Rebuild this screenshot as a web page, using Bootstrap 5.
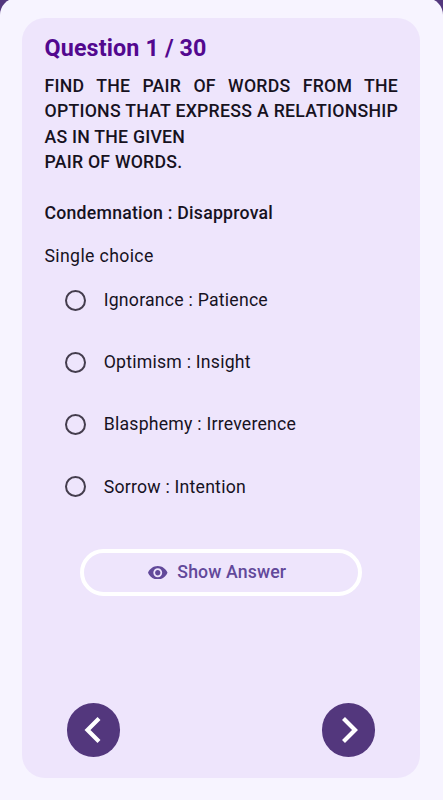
<!DOCTYPE html>
<html lang="en">
<head>
<meta charset="utf-8">
<meta name="viewport" content="width=device-width, initial-scale=1">
<title>Question 1 / 30</title>
<link href="https://cdn.jsdelivr.net/npm/bootstrap@5.3.0/dist/css/bootstrap.min.css" rel="stylesheet">
<style>
body{font-family:Roboto,"Noto Sans",sans-serif;background:#53377d;color:#17121f;height:800px;font-size:17.7px;letter-spacing:.22px;overflow:hidden}
.sheet{background:#f7f4ff;border-radius:17px 17px 0 0;height:802px;margin-top:-2px;padding:20px 23px 22px 22px}
.quiz{background:#eee5fc;border-radius:23px;padding:0 22px 21.5px 22.5px}
.heading{font-size:23.3px;font-weight:700;color:#53088f;line-height:28px;margin:16px 0 0;letter-spacing:.14px}
.prompt{font-weight:500;line-height:25.4px;text-align:justify;margin:12px 0 0;letter-spacing:.23px}
.kind{line-height:26px;margin:16.5px 0 0;letter-spacing:.35px}
.choices{padding-left:20.5px}
.choice{height:62.3px;gap:17.7px;cursor:pointer}
.choice .form-check-input{width:21px;height:21px;border:2.3px solid #443d4d;background-color:transparent;margin:0}
.reveal{width:282px;height:47px;border:4px solid #fff;color:#62499a;font-size:17.7px;font-weight:500;letter-spacing:.12px;margin:31px auto 0;gap:9.5px}
.reveal:hover{border-color:#fff;color:#62499a}
.round{width:53.5px;height:53.5px;background:#53377d;padding:0}
.steps{padding:0 22.7px 0 22px}
</style>
<script src="https://cdn.jsdelivr.net/npm/bootstrap@5.3.0/dist/js/bootstrap.bundle.min.js"></script>
</head>
<body>
<main class="sheet">
<section class="quiz d-flex flex-column h-100">
<h1 class="heading">Question 1 / 30</h1>
<p class="prompt">FIND THE PAIR OF WORDS FROM THE OPTIONS THAT EXPRESS A RELATIONSHIP AS IN THE GIVEN<br>PAIR OF WORDS.<br><br>Condemnation : Disapproval</p>
<p class="kind">Single choice</p>
<div class="choices">
<label class="choice d-flex align-items-center"><input class="form-check-input" type="radio" name="answer"><span>Ignorance : Patience</span></label>
<label class="choice d-flex align-items-center"><input class="form-check-input" type="radio" name="answer"><span>Optimism : Insight</span></label>
<label class="choice d-flex align-items-center"><input class="form-check-input" type="radio" name="answer"><span>Blasphemy : Irreverence</span></label>
<label class="choice d-flex align-items-center"><input class="form-check-input" type="radio" name="answer"><span>Sorrow : Intention</span></label>
</div>
<button class="btn reveal rounded-pill d-flex align-items-center justify-content-center py-0 ps-0 pe-2" type="button">
<svg width="19.5" height="13.5" viewBox="1 4.5 22 15" preserveAspectRatio="none" fill="currentColor" aria-hidden="true"><path d="M12 4.5C7 4.5 2.73 7.61 1 12c1.73 4.39 6 7.5 11 7.5s9.27-3.11 11-7.5c-1.73-4.39-6-7.5-11-7.5zM12 17c-2.76 0-5-2.24-5-5s2.24-5 5-5 5 2.24 5 5-2.24 5-5 5zm0-8c-1.66 0-3 1.34-3 3s1.34 3 3 3 3-1.34 3-3-1.34-3-3-3z"/></svg>
<span>Show Answer</span></button>
<nav class="steps d-flex justify-content-between mt-auto" aria-label="Questions">
<button class="btn round rounded-circle border-0 d-flex align-items-center justify-content-center" type="button" aria-label="Previous"><svg width="54" height="54" fill="none" stroke="#fff" stroke-width="4.2"><path d="M32 15.5 20.500 27l11.500 11.500"/></svg></button>
<button class="btn round rounded-circle border-0 d-flex align-items-center justify-content-center" type="button" aria-label="Next"><svg width="54" height="54" fill="none" stroke="#fff" stroke-width="4.2"><path d="M21.5 15.500 33 27 21.500 38.500"/></svg></button>
</nav>
</section>
</main>
</body>
</html>
